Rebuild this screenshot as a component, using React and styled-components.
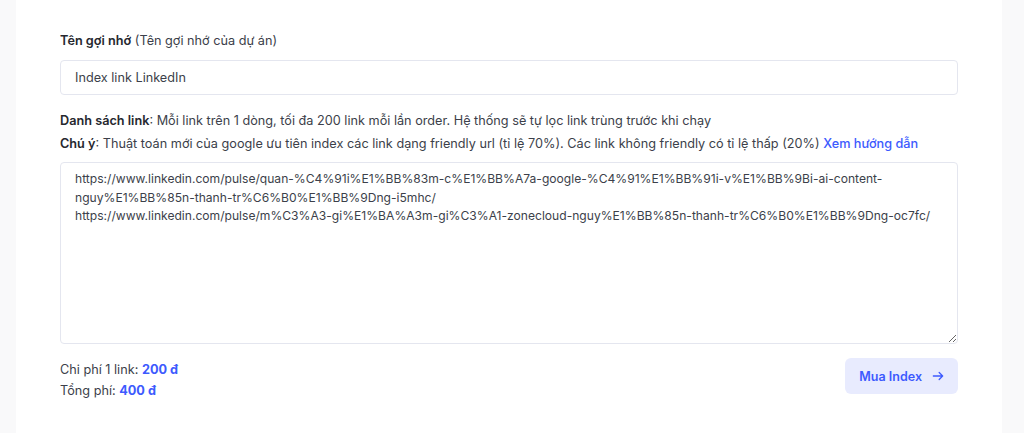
import React, { useState } from "react";
import styled, { createGlobalStyle } from "styled-components";

const GlobalStyle = createGlobalStyle`
  html, body {
    margin: 0;
    padding: 0;
    background: #f9f9fa;
    font-family: Inter, "Noto Sans", sans-serif;
  }
`;

const Page = styled.div`
  padding: 0 22px 0 16px;
  height: 433px;
  box-sizing: border-box;
`;

const Card = styled.div`
  background: #fff;
  height: 100%;
  box-sizing: border-box;
  padding: 33px 44px 0 44px;
  color: #3c3f4a;
  font-size: 12.7px;
`;

const Label = styled.div`
  color: #3c3f4a;
  margin-bottom: 12px;
  b {
    font-weight: 600;
    color: #26282f;
  }
`;

const Input = styled.input`
  width: 100%;
  box-sizing: border-box;
  height: 35px;
  border: 1px solid #e4e6ef;
  border-radius: 4px;
  padding: 0 14px;
  font-family: inherit;
  font-size: 12.7px;
  color: #3c3f4a;
  outline: none;
`;

const Notes = styled.div`
  margin-top: 14px;
  line-height: 23px;
  b {
    font-weight: 600;
    color: #26282f;
  }
`;

const Link = styled.a`
  color: #3d5afe;
  text-decoration: none;
  font-weight: 500;
`;

const Area = styled.textarea`
  display: block;
  width: 100%;
  box-sizing: border-box;
  height: 182px;
  margin-top: 7px;
  border: 1px solid #e4e6ef;
  border-radius: 4px;
  padding: 7px 14px;
  font-family: inherit;
  font-size: 12.1px;
  line-height: 18.5px;
  color: #3c3f4a;
  outline: none;
`;

const Footer = styled.div`
  display: flex;
  justify-content: space-between;
  align-items: flex-start;
  margin-top: 14px;
`;

const Costs = styled.div`
  line-height: 21px;
  padding-top: 1px;
`;

const Price = styled.span`
  color: #3d5afe;
  font-weight: 700;
`;

const BuyButton = styled.button`
  display: flex;
  align-items: center;
  gap: 9px;
  height: 36px;
  padding: 0 13px 0 14px;
  border: none;
  border-radius: 6px;
  background: #e8ebfe;
  color: #3d5afe;
  font-family: inherit;
  font-size: 12.5px;
  font-weight: 600;
  cursor: pointer;
`;

const links =
  "https://www.linkedin.com/pulse/quan-%C4%91i%E1%BB%83m-c%E1%BB%A7a-google-%C4%91%E1%BB%91i-v%E1%BB%9Bi-ai-content-nguy%E1%BB%85n-thanh-tr%C6%B0%E1%BB%9Dng-i5mhc/\nhttps://www.linkedin.com/pulse/m%C3%A3-gi%E1%BA%A3m-gi%C3%A1-zonecloud-nguy%E1%BB%85n-thanh-tr%C6%B0%E1%BB%9Dng-oc7fc/";

const App = () => {
  const [name, setName] = useState("Index link LinkedIn");
  const [value, setValue] = useState(links);
  return (
    <>
      <GlobalStyle />
      <Page>
        <Card>
          <Label>
            <b>Tên gợi nhớ</b> (Tên gợi nhớ của dự án)
          </Label>
          <Input value={name} onChange={(e) => setName(e.target.value)} />
          <Notes>
            <div>
              <b>Danh sách link</b>: Mỗi link trên 1 dòng, tối đa 200 link mỗi
              lần order. Hệ thống sẽ tự lọc link trùng trước khi chạy
            </div>
            <div>
              <b>Chú ý</b>: Thuật toán mới của google ưu tiên index các link
              dạng friendly url (tỉ lệ 70%). Các link không friendly có tỉ lệ
              thấp (20%) <Link href="#">Xem hướng dẫn</Link>
            </div>
          </Notes>
          <Area value={value} onChange={(e) => setValue(e.target.value)} />
          <Footer>
            <Costs>
              <div>
                Chi phí 1 link: <Price>200 đ</Price>
              </div>
              <div>
                Tổng phí: <Price>400 đ</Price>
              </div>
            </Costs>
            <BuyButton>
              Mua Index
              <svg width="14" height="14" viewBox="0 0 24 24" fill="none" stroke="currentColor" strokeWidth="2.2" strokeLinecap="round" strokeLinejoin="round">
                <path d="M4 12h16M14 6l6 6-6 6" />
              </svg>
            </BuyButton>
          </Footer>
        </Card>
      </Page>
    </>
  );
};

export default App;
